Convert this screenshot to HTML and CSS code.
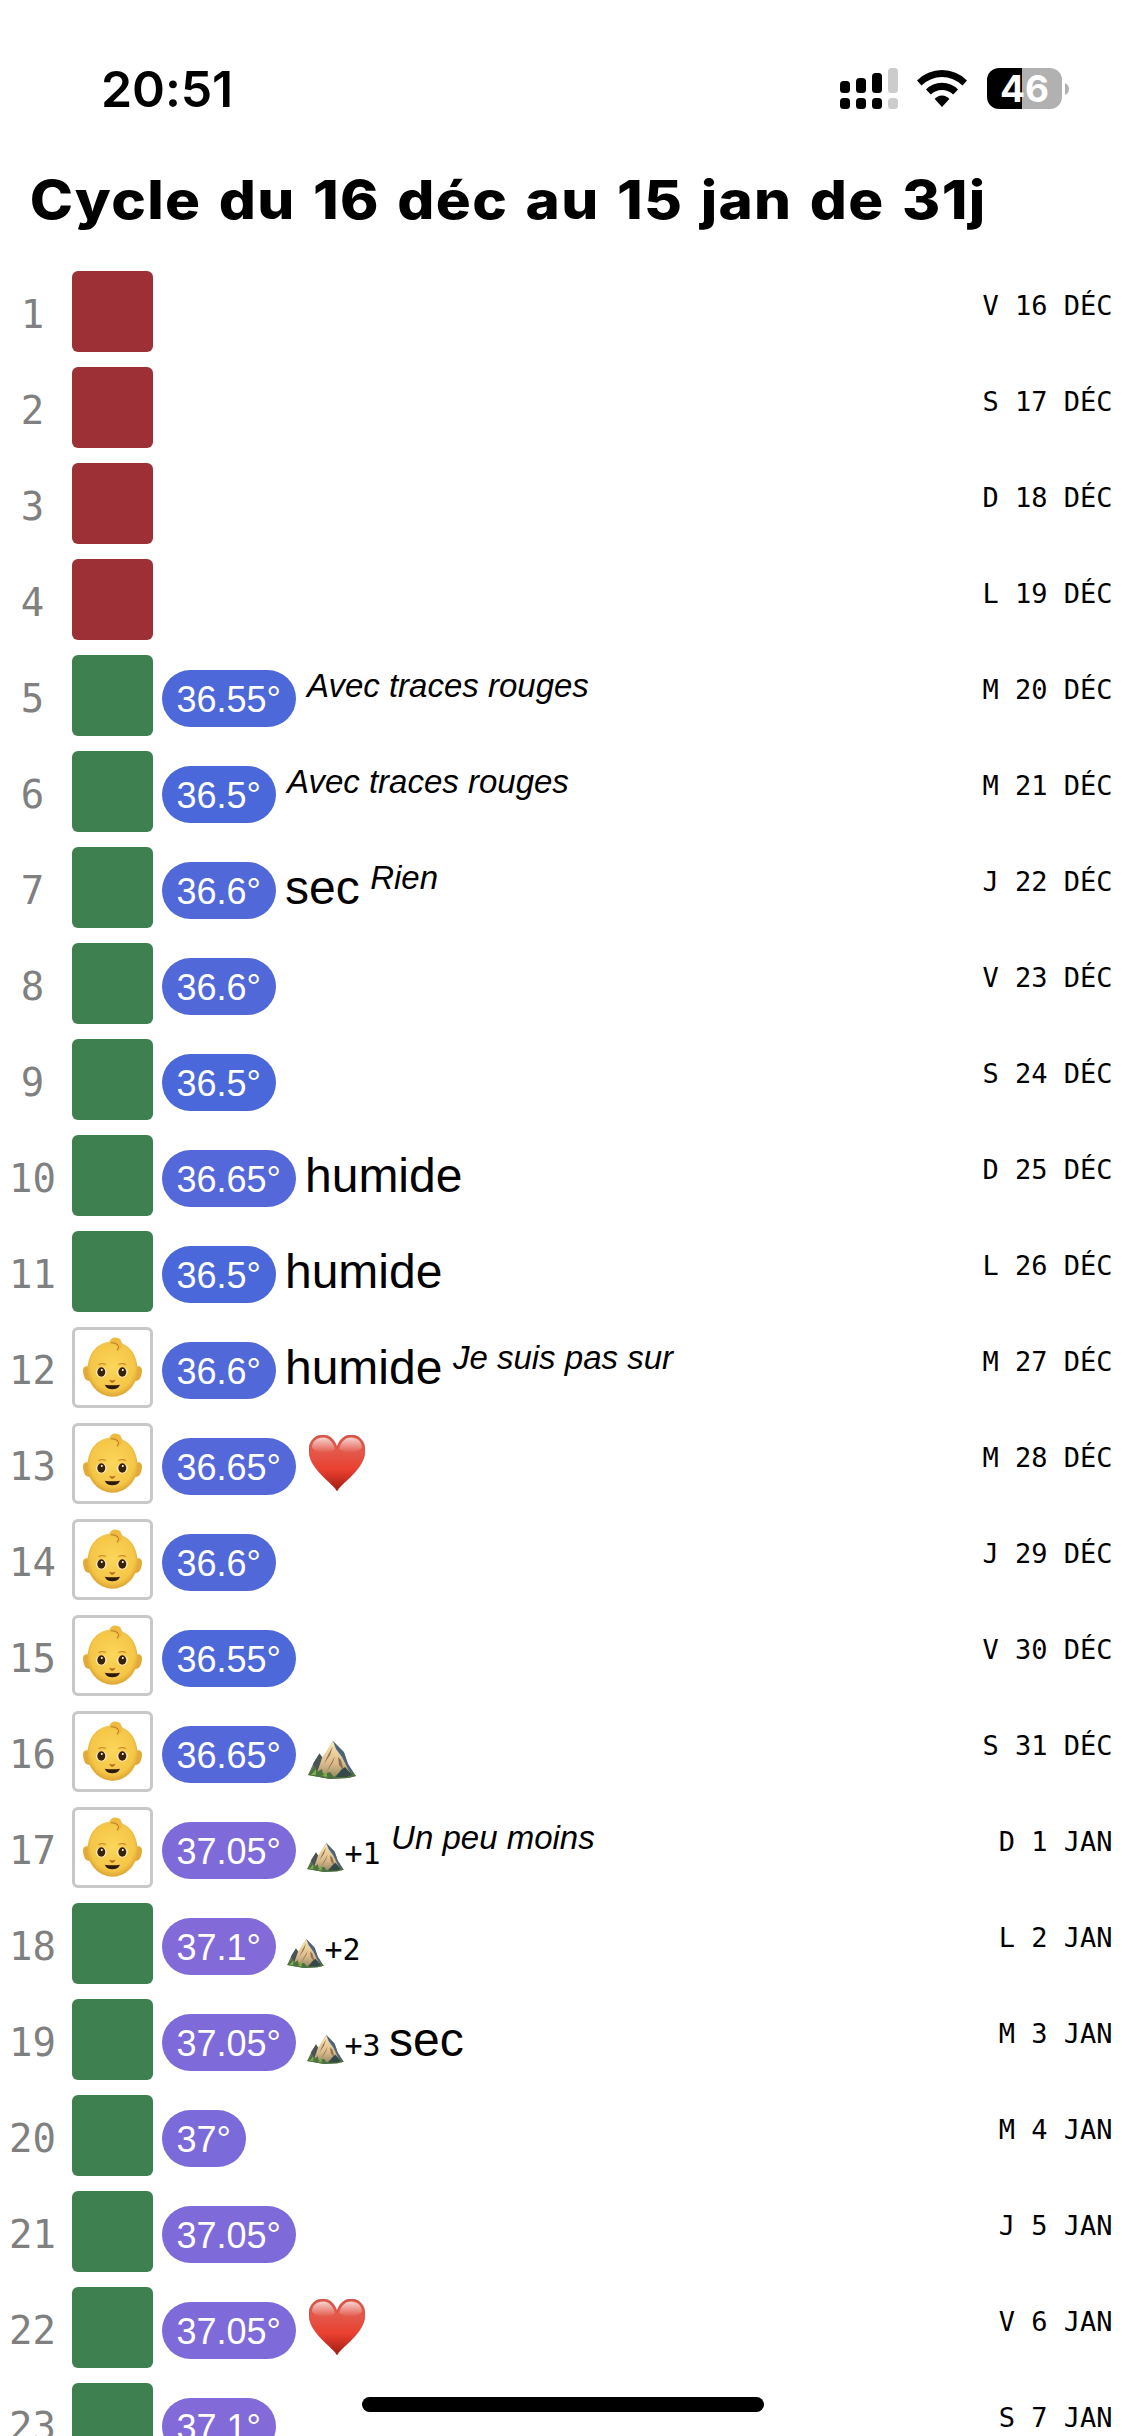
FILE: index.html
```html
<!DOCTYPE html>
<html lang="fr">
<head>
<meta charset="utf-8">
<title>Cycle</title>
<link rel="stylesheet" href="styles.css">
</head>
<body>
<svg class="defs" width="0" height="0" aria-hidden="true">
  <defs>
    <radialGradient id="skin" cx=".5" cy=".45" r=".58"><stop offset="0" stop-color="#fbd658"/><stop offset=".75" stop-color="#f5c648"/><stop offset="1" stop-color="#d79b2c"/></radialGradient>
    <linearGradient id="love" x1="0" y1="0" x2="0" y2="1"><stop offset="0" stop-color="#dc5546"/><stop offset=".3" stop-color="#e4584a"/><stop offset=".62" stop-color="#e9402f"/><stop offset="1" stop-color="#a01c14"/></linearGradient>
    <linearGradient id="shine" x1="0" y1="0" x2="0" y2="1"><stop offset="0" stop-color="#fff" stop-opacity=".75"/><stop offset="1" stop-color="#fff" stop-opacity="0"/></linearGradient>
    <linearGradient id="rock" x1="0" y1="0" x2="0" y2="1"><stop offset="0" stop-color="#fbeab2"/><stop offset=".6" stop-color="#dcbb8c"/><stop offset="1" stop-color="#938b60"/></linearGradient>
  </defs>
  <symbol id="baby" viewBox="3 3 75 75">
    <path d="M17 39.500Q11 38 11 44Q11.500 54 18 54ZM64 39.500Q70 38 70 44Q69.500 54 63 54Z" fill="#e3aa37"/>
    <path d="M40.500 14.500C55 14.500 65.500 26 65.500 43C65.500 59 53 69.700 40.500 69.700S15.500 59 15.500 43C15.500 26 26 14.500 40.500 14.500Z" fill="url(#skin)"/>
    <path d="M37.500 15.500C38 10.500 45.500 8.500 49 13.500C51.500 18 49 22.500 45.500 24C48 19.500 45 16.500 37.500 16.500Z" fill="#eebb40"/>
    <path d="M39 15.800C45 15.500 48.500 18.800 45 23.500" fill="none" stroke="#b9832b" stroke-width="1.100"/>
    <path d="M26.500 37.800Q30 35.800 34 37.500M46.500 37.500Q50.500 35.800 54 37.800" fill="none" stroke="#c98f2c" stroke-width="1.200"/>
    <ellipse cx="29.300" cy="45.300" rx="5.500" ry="5.200" fill="#fce9b4"/>
    <ellipse cx="50.300" cy="45.300" rx="5.500" ry="5.200" fill="#fce9b4"/>
    <ellipse cx="29.300" cy="45" rx="4" ry="4.700" fill="#3b2109"/>
    <ellipse cx="50.300" cy="45" rx="4" ry="4.700" fill="#3b2109"/>
    <circle cx="29.800" cy="43" r="1" fill="#fff"/><circle cx="50.800" cy="43" r="1" fill="#fff"/>
    <path d="M37.300 52.500Q40.300 54.500 43.300 52.500Q42.500 55.800 40.300 55.800T37.300 52.500Z" fill="#b36d1c"/>
    <path d="M32.800 57.700Q40.300 59 48 57.700Q46 62.300 40.300 62.300T32.800 57.700Z" fill="#2b1a0b"/>
  </symbol>
  <symbol id="heart" viewBox="0 0 56 56">
    <path d="M28 56C24 49 11 41 4 29C1 23.500 0 19.500 0 15C0 6 6 0 14 0C21 0 26 5 28 12.500C30 5 35 0 42 0C50 0 56 6 56 15C56 19.500 55 23.500 52 29C45 41 32 49 28 56Z" fill="url(#love)" stroke="#b8291f" stroke-opacity=".5"/>
    <path d="M3 13C3 6 8 2.500 14 2.500C20 2.500 24 7 26 14Q14 22 3 13ZM30 14C32 7 36 2.500 42 2.500C48 2.500 53 6 53 13Q43 22 30 14Z" fill="url(#shine)"/>
  </symbol>
  <symbol id="mountain" viewBox="0 0 48 38">
    <path d="M0 34L6 21L11.500 12.500L15 17L25 0L36 12L40 23L48 35L40 37L22 38Z" fill="#6b7460"/>
    <path d="M5 23L11.500 12.500L15 18L8 32Z" fill="#4a5358"/>
    <path d="M25 0L14 17L8 35L24 37L44 33L36 13Z" fill="url(#rock)"/>
    <path d="M25 0L36 11L40 23L46 33L41 30L34 16L28 8Z" fill="#4d6480"/>
    <path d="M25 5L22 14L16 23L20 14ZM27 15L21 26L18 32L25 21ZM30 16L31 24L36 30L33 19Z" fill="#8d7254"/>
    <path d="M0 34L7 25L9 31L14 28L15 33L22 31L26 36L32 31L38 34L43 30L48 35L40 37L22 38Z" fill="#4c7240"/>
    <path d="M3 34L8 28L8 34ZM14 35L19 31L19 36Z" fill="#7fae4a"/>
    <path d="M28 36L33 29L37 26L44 34L38 36Z" fill="#35494a"/>
  </symbol>
</svg>

<header class="status">
  <span class="clock">20:51</span>
  <span class="indicators">
    <svg class="signal" viewBox="0 0 58 41">
      <g><rect y="13" width="10" height="12" rx="3.500"/><rect x="16" y="10" width="10" height="15" rx="3.500"/><rect x="32" y="5" width="10" height="20" rx="3.500"/>
      <rect y="30" width="10" height="11" rx="3.500"/><rect x="16" y="30" width="10" height="11" rx="3.500"/><rect x="32" y="30" width="10" height="11" rx="3.500"/></g>
      <g fill="#ccc"><rect x="48" width="10" height="25" rx="3.500"/><rect x="48" y="30" width="10" height="11" rx="3.500"/></g>
    </svg>
    <svg class="wifi" viewBox="0 0 50 37">
      <path d="M0 10.500Q10.500 0 25 0T50 10.500L45.500 15.500Q36.500 7 25 7T4.500 15.500Z"/>
      <path d="M9 19.500Q15.500 12.700 25 12.700T41 19.500L36.200 24.500Q31.500 20 25 20T13.800 24.500Z"/>
      <path d="M17.700 29Q20.500 25.500 25 25.500T32.300 29L25 37Z"/>
    </svg>
    <span class="battery"><span class="level">46</span><svg class="tip" viewBox="0 0 4 12"><path d="M0 0Q4 2 4 6T0 12Z" fill="#b1b1b1"/></svg></span>
  </span>
</header>

<h1 class="title">Cycle du 16 déc au 15 jan de 31j</h1>

<main class="days">
  <div class="day"><span class="num">1</span><i class="mark red"></i><div class="entry"></div><time class="date">V 16 DÉC</time></div>
  <div class="day"><span class="num">2</span><i class="mark red"></i><div class="entry"></div><time class="date">S 17 DÉC</time></div>
  <div class="day"><span class="num">3</span><i class="mark red"></i><div class="entry"></div><time class="date">D 18 DÉC</time></div>
  <div class="day"><span class="num">4</span><i class="mark red"></i><div class="entry"></div><time class="date">L 19 DÉC</time></div>
  <div class="day"><span class="num">5</span><i class="mark green"></i><div class="entry"><span class="temp t3655">36.55°</span><em class="note">Avec traces rouges</em></div><time class="date">M 20 DÉC</time></div>
  <div class="day"><span class="num">6</span><i class="mark green"></i><div class="entry"><span class="temp t365">36.5°</span><em class="note">Avec traces rouges</em></div><time class="date">M 21 DÉC</time></div>
  <div class="day"><span class="num">7</span><i class="mark green"></i><div class="entry"><span class="temp t366">36.6°</span><span class="feel">sec</span><em class="note">Rien</em></div><time class="date">J 22 DÉC</time></div>
  <div class="day"><span class="num">8</span><i class="mark green"></i><div class="entry"><span class="temp t366">36.6°</span></div><time class="date">V 23 DÉC</time></div>
  <div class="day"><span class="num">9</span><i class="mark green"></i><div class="entry"><span class="temp t365">36.5°</span></div><time class="date">S 24 DÉC</time></div>
  <div class="day"><span class="num">10</span><i class="mark green"></i><div class="entry"><span class="temp t3665">36.65°</span><span class="feel">humide</span></div><time class="date">D 25 DÉC</time></div>
  <div class="day"><span class="num">11</span><i class="mark green"></i><div class="entry"><span class="temp t365">36.5°</span><span class="feel">humide</span></div><time class="date">L 26 DÉC</time></div>
  <div class="day"><span class="num">12</span><svg class="mark fertile"><use href="#baby"/></svg><div class="entry"><span class="temp t366">36.6°</span><span class="feel">humide</span><em class="note">Je suis pas sur</em></div><time class="date">M 27 DÉC</time></div>
  <div class="day"><span class="num">13</span><svg class="mark fertile"><use href="#baby"/></svg><div class="entry"><span class="temp t3665">36.65°</span><svg class="heart"><use href="#heart"/></svg></div><time class="date">M 28 DÉC</time></div>
  <div class="day"><span class="num">14</span><svg class="mark fertile"><use href="#baby"/></svg><div class="entry"><span class="temp t366">36.6°</span></div><time class="date">J 29 DÉC</time></div>
  <div class="day"><span class="num">15</span><svg class="mark fertile"><use href="#baby"/></svg><div class="entry"><span class="temp t3655">36.55°</span></div><time class="date">V 30 DÉC</time></div>
  <div class="day"><span class="num">16</span><svg class="mark fertile"><use href="#baby"/></svg><div class="entry"><span class="temp t3665">36.65°</span><svg class="peak"><use href="#mountain"/></svg></div><time class="date">S 31 DÉC</time></div>
  <div class="day"><span class="num">17</span><svg class="mark fertile"><use href="#baby"/></svg><div class="entry"><span class="temp t3705">37.05°</span><svg class="peak small"><use href="#mountain"/></svg><span class="after">+1</span><em class="note">Un peu moins</em></div><time class="date">D 1 JAN</time></div>
  <div class="day"><span class="num">18</span><i class="mark green"></i><div class="entry"><span class="temp t371">37.1°</span><svg class="peak small"><use href="#mountain"/></svg><span class="after">+2</span></div><time class="date">L 2 JAN</time></div>
  <div class="day"><span class="num">19</span><i class="mark green"></i><div class="entry"><span class="temp t3705">37.05°</span><svg class="peak small"><use href="#mountain"/></svg><span class="after">+3</span><span class="feel">sec</span></div><time class="date">M 3 JAN</time></div>
  <div class="day"><span class="num">20</span><i class="mark green"></i><div class="entry"><span class="temp t37">37°</span></div><time class="date">M 4 JAN</time></div>
  <div class="day"><span class="num">21</span><i class="mark green"></i><div class="entry"><span class="temp t3705">37.05°</span></div><time class="date">J 5 JAN</time></div>
  <div class="day"><span class="num">22</span><i class="mark green"></i><div class="entry"><span class="temp t3705">37.05°</span><svg class="heart"><use href="#heart"/></svg></div><time class="date">V 6 JAN</time></div>
  <div class="day"><span class="num">23</span><i class="mark green"></i><div class="entry"><span class="temp t371">37.1°</span></div><time class="date">S 7 JAN</time></div>
</main>
<div class="home"></div>
</body>
</html>
```
FILE: styles.css
```css
* { box-sizing: border-box; }
body {
  margin: 0;
  position: relative;
  width: 1125px;
  height: 2436px;
  overflow: hidden;
  background: #fff;
  color: #000;
  font-family: "Liberation Sans", Arial, sans-serif;
}
.defs { display: block; height: 0; }
.status {
  display: flex;
  justify-content: space-between;
  height: 132px;
  padding: 68px 56px 0 101px;
}
.clock {
  font: 600 50px/42px Inter, sans-serif;
  letter-spacing: -.1px;
}
.indicators { display: flex; align-items: flex-start; }
.signal { width: 58px; height: 41px; margin-right: 19px; }
.wifi { width: 50px; height: 37px; margin: 2px 20px 0 0; }
.battery { display: flex; align-items: center; gap: 3px; }
.level {
  width: 75px;
  height: 41px;
  border-radius: 12px;
  background: linear-gradient(90deg, #000 35px, #b1b1b1 35px);
  color: #fff;
  font: 700 37px/42px Inter, sans-serif;
  text-align: center;
}
.tip { width: 4px; height: 12px; }
.title {
  margin: 0;
  width: 900px;
  height: 139px;
  padding: 36px 0 0 27px;
  font: 800 53px/64px Inter, sans-serif;
  letter-spacing: 1.2px;
  word-spacing: 3px;
  white-space: nowrap;
  transform: scaleX(1.1);
  transform-origin: 0 0;
}
.day {
  display: grid;
  grid-template-columns: 66px 81px 1fr auto;
  column-gap: 6px;
  align-items: start;
  height: 96px;
  padding-right: 12.5px;
}
.num {
  padding: 21px 1px 0 0;
  color: #808080;
  font: 39px/46px "DejaVu Sans Mono", monospace;
  text-align: center;
}
.mark { display: block; width: 81px; height: 81px; border-radius: 6px; }
.red { background: #9c3036; }
.green { background: #3f8051; }
.fertile { border: 3px solid #c8c8c8; }
.entry {
  display: flex;
  align-items: baseline;
  padding: 15px 0 0 3px;
  white-space: nowrap;
}
.temp {
  height: 57px;
  padding: 0 15.5px 0 14.5px;
  border-radius: 29px;
  color: #fff;
  font-size: 36px;
  line-height: 59px;
}
.t365 { background: #4a68da; }
.t3655 { background: #4d68d9; }
.t366 { background: #5168d8; }
.t3665 { background: #5568d9; }
.t37 { background: #7b6ad9; }
.t3705 { background: #7e6ad9; }
.t371 { background: #826ad9; }
.feel { margin-left: 8.5px; font-size: 48px; line-height: 48px; }
.note {
  align-self: flex-start;
  margin: -5px 0 0 10.5px;
  font-size: 33px;
  line-height: 42px;
}
.heart {
  align-self: flex-start;
  width: 56px;
  height: 56px;
  margin: -3px 0 0 13px;
  overflow: visible;
}
.peak {
  align-self: flex-start;
  width: 48px;
  height: 38px;
  margin: 15px 0 0 12px;
}
.peak.small { width: 37px; height: 29px; margin: 21px 0 0 11px; }
.after { font: 30px/36px "DejaVu Sans Mono", monospace; }
.date {
  padding-top: 18px;
  font: 27px/34px "DejaVu Sans Mono", monospace;
  white-space: nowrap;
}
.home {
  position: absolute;
  left: 362px;
  top: 2397px;
  width: 402px;
  height: 15px;
  border-radius: 8px;
  background: #000;
}
```
